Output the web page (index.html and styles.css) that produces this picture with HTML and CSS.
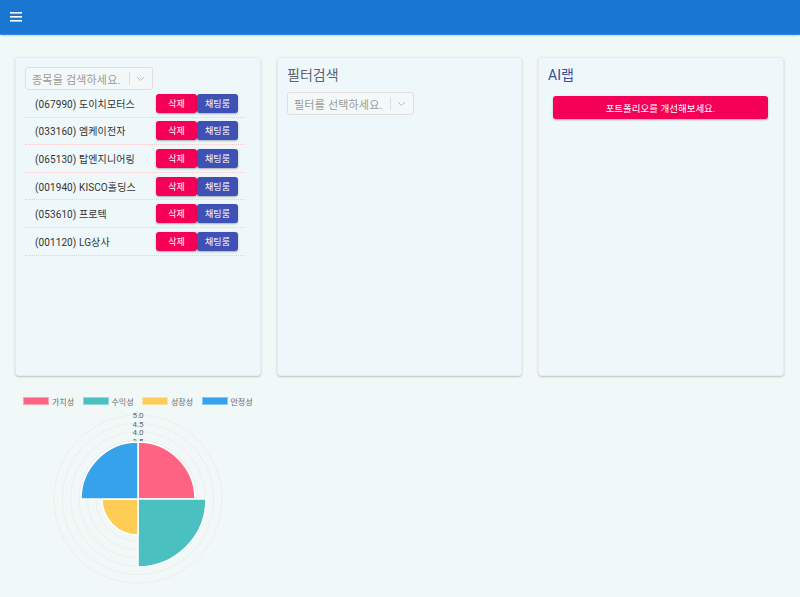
FILE: index.html
```html
<!DOCTYPE html>
<html lang="ko">
<head>
<meta charset="utf-8">
<title>Portfolio</title>
<link rel="stylesheet" href="styles.css">
</head>
<body>
<header class="appbar">
  <svg class="menu-icon" width="14" height="12" viewBox="0 0 14 12"><rect x="1" y="1" width="12" height="1.6" fill="#fff"/><rect x="1" y="5" width="12" height="1.6" fill="#fff"/><rect x="1" y="9" width="12" height="1.6" fill="#fff"/></svg>
</header>
<main class="main">
  <section class="cards">
    <div class="card">
      <div class="select select-stock">
        <span class="placeholder">종목을 검색하세요.</span>
        <span class="sep"></span>
        <svg class="chev" width="9" height="6" viewBox="0 0 9 6"><path d="M1 1 L4.5 4.5 L8 1" fill="none" stroke="#bbb" stroke-width="1"/></svg>
      </div>
      <ul class="stock-list">
        <li class="stock-row"><span class="stock-name">(067990) 도이치모터스</span><span class="btns"><button class="btn btn-del">삭제</button><button class="btn btn-chat">채팅룸</button></span></li>
        <li class="stock-row"><span class="stock-name">(033160) 엠케이전자</span><span class="btns"><button class="btn btn-del">삭제</button><button class="btn btn-chat">채팅룸</button></span></li>
        <li class="stock-row"><span class="stock-name">(065130) 탑엔지니어링</span><span class="btns"><button class="btn btn-del">삭제</button><button class="btn btn-chat">채팅룸</button></span></li>
        <li class="stock-row"><span class="stock-name">(001940) KISCO홀딩스</span><span class="btns"><button class="btn btn-del">삭제</button><button class="btn btn-chat">채팅룸</button></span></li>
        <li class="stock-row"><span class="stock-name">(053610) 프로텍</span><span class="btns"><button class="btn btn-del">삭제</button><button class="btn btn-chat">채팅룸</button></span></li>
        <li class="stock-row"><span class="stock-name">(001120) LG상사</span><span class="btns"><button class="btn btn-del">삭제</button><button class="btn btn-chat">채팅룸</button></span></li>
      </ul>
    </div>
    <div class="card">
      <h2 class="card-title">필터검색</h2>
      <div class="select select-filter">
        <span class="placeholder">필터를 선택하세요.</span>
        <span class="sep"></span>
        <svg class="chev" width="9" height="6" viewBox="0 0 9 6"><path d="M1 1 L4.5 4.5 L8 1" fill="none" stroke="#bbb" stroke-width="1"/></svg>
      </div>
    </div>
    <div class="card">
      <h2 class="card-title title-ai">AI랩</h2>
      <button class="btn-improve">포트폴리오를 개선해보세요.</button>
    </div>
  </section>
  <section class="chart">
    <div class="legend">
      <span class="legend-item"><span class="swatch sw-pink"></span>가치성</span>
      <span class="legend-item"><span class="swatch sw-teal"></span>수익성</span>
      <span class="legend-item"><span class="swatch sw-yellow"></span>성장성</span>
      <span class="legend-item"><span class="swatch sw-blue"></span>안정성</span>
    </div>
    <svg class="polar" width="275" height="190" viewBox="0 0 275 190">
      <g fill="none" stroke="#f6cfcf" stroke-width="0.8" stroke-dasharray="1.2 1.6">
        <circle cx="138" cy="93" r="8.4"/><circle cx="138" cy="93" r="16.8"/><circle cx="138" cy="93" r="25.2"/><circle cx="138" cy="93" r="33.6"/><circle cx="138" cy="93" r="42"/><circle cx="138" cy="93" r="50.4"/><circle cx="138" cy="93" r="58.8"/><circle cx="138" cy="93" r="67.2"/><circle cx="138" cy="93" r="75.6"/><circle cx="138" cy="93" r="84"/>
      </g>
      <g font-family="Roboto, 'Noto Sans', sans-serif" font-size="8" fill="#666" text-anchor="middle">
        <text x="138" y="12">5.0</text>
        <text x="138" y="20.5">4.5</text>
        <text x="138" y="29">4.0</text>
        <text x="138" y="37.5">3.5</text>
      </g>
      <g stroke="#fff" stroke-width="1.5">
        <path d="M138 93 L138 36 A57 57 0 0 1 195 93 Z" fill="#ff6384"/>
        <path d="M138 93 L206 93 A68 68 0 0 1 138 161 Z" fill="#4bc0c0"/>
        <path d="M138 93 L138 129 A36 36 0 0 1 102 93 Z" fill="#ffcd56"/>
        <path d="M138 93 L81 93 A57 57 0 0 1 138 36 Z" fill="#36a2eb"/>
      </g>
    </svg>
  </section>
</main>
</body>
</html>
```
FILE: styles.css
```css
* { box-sizing: border-box; }
html, body { margin: 0; padding: 0; }
body {
  background: #f1f8f8;
  font-family: Roboto, "Noto Sans CJK KR", "Noto Sans", sans-serif;
  color: #333;
  width: 800px;
  height: 597px;
  overflow: hidden;
}
.appbar {
  height: 35px;
  background: #1976d2;
  display: flex;
  align-items: center;
  padding-left: 9px;
  box-shadow: 0 1px 2px rgba(0,0,0,0.15);
  border-bottom: 1px dotted rgba(255,170,170,0.35);
}
.menu-icon { display: block; }
.main { padding: 22px 16px 0 15px; }
.cards {
  display: grid;
  grid-template-columns: 246px 245px 246px;
  gap: 16px;
}
.card {
  height: 319px;
  background: #eef8fa;
  border-radius: 4px;
  border: 1px dotted rgba(240,190,190,0.45);
  box-shadow: 0 1px 2px rgba(0,0,0,0.22);
  padding: 9px 9px;
}
.select {
  display: flex;
  align-items: center;
  height: 23px;
  border: 1px solid #e4dede;
  border-radius: 3px;
  background: #f3f9f9;
  padding-left: 6px;
}
.select-stock { width: 128px; }
.select-filter { width: 127px; }
.placeholder { font-size: 11px; color: #999; letter-spacing: 0.2px; flex: 1; white-space: nowrap; }
.sep { width: 1px; height: 13px; background: #ddd; margin-right: 6px; }
.chev { margin-right: 7px; display: block; }
.stock-list { list-style: none; margin: 0; padding: 0; width: 220px; }
.stock-row {
  height: 27.6px;
  display: flex;
  align-items: center;
  justify-content: space-between;
  padding: 0 7px 0 10px;
  border-bottom: 1px dotted rgba(240,170,170,0.55);
}
.stock-name { font-size: 10px; color: #333; letter-spacing: 0.1px; }
.btns { display: flex; }
.btn {
  width: 41px;
  height: 19px;
  border: none;
  color: #fff;
  font-family: inherit;
  font-size: 9px;
  font-weight: 400;
  padding: 0;
  border-radius: 3px;
  box-shadow: 0 1px 2px rgba(0,0,0,0.3);
}
.btn-del { background: #f50057; }
.btn-chat { background: #3f51b5; }
.card-title {
  margin: 0;
  height: 25px;
  font-size: 14px;
  font-weight: 400;
  color: #5f6070;
  line-height: 16px;
}
.title-ai { color: #3f4a9a; height: 29px; }
.btn-improve {
  display: block;
  width: 215px;
  height: 23px;
  margin: 0 0 0 5px;
  background: #f50057;
  color: #fff;
  border: none;
  border-radius: 3px;
  font-family: inherit;
  font-size: 9.5px;
  box-shadow: 0 1px 2px rgba(0,0,0,0.3);
}
.chart { margin: 20px 0 0 -15px; }
.legend { display: flex; padding-left: 23px; height: 10px; align-items: center; }
.legend-item { display: flex; align-items: center; font-size: 8px; color: #666; width: 59.5px; }
.swatch { width: 26px; height: 8px; margin-right: 3px; border: 1px solid rgba(255,255,255,0.4); }
.sw-pink { background: #ff6384; }
.sw-teal { background: #4bc0c0; }
.sw-yellow { background: #ffcd56; }
.sw-blue { background: #36a2eb; }
.polar { display: block; }
```
